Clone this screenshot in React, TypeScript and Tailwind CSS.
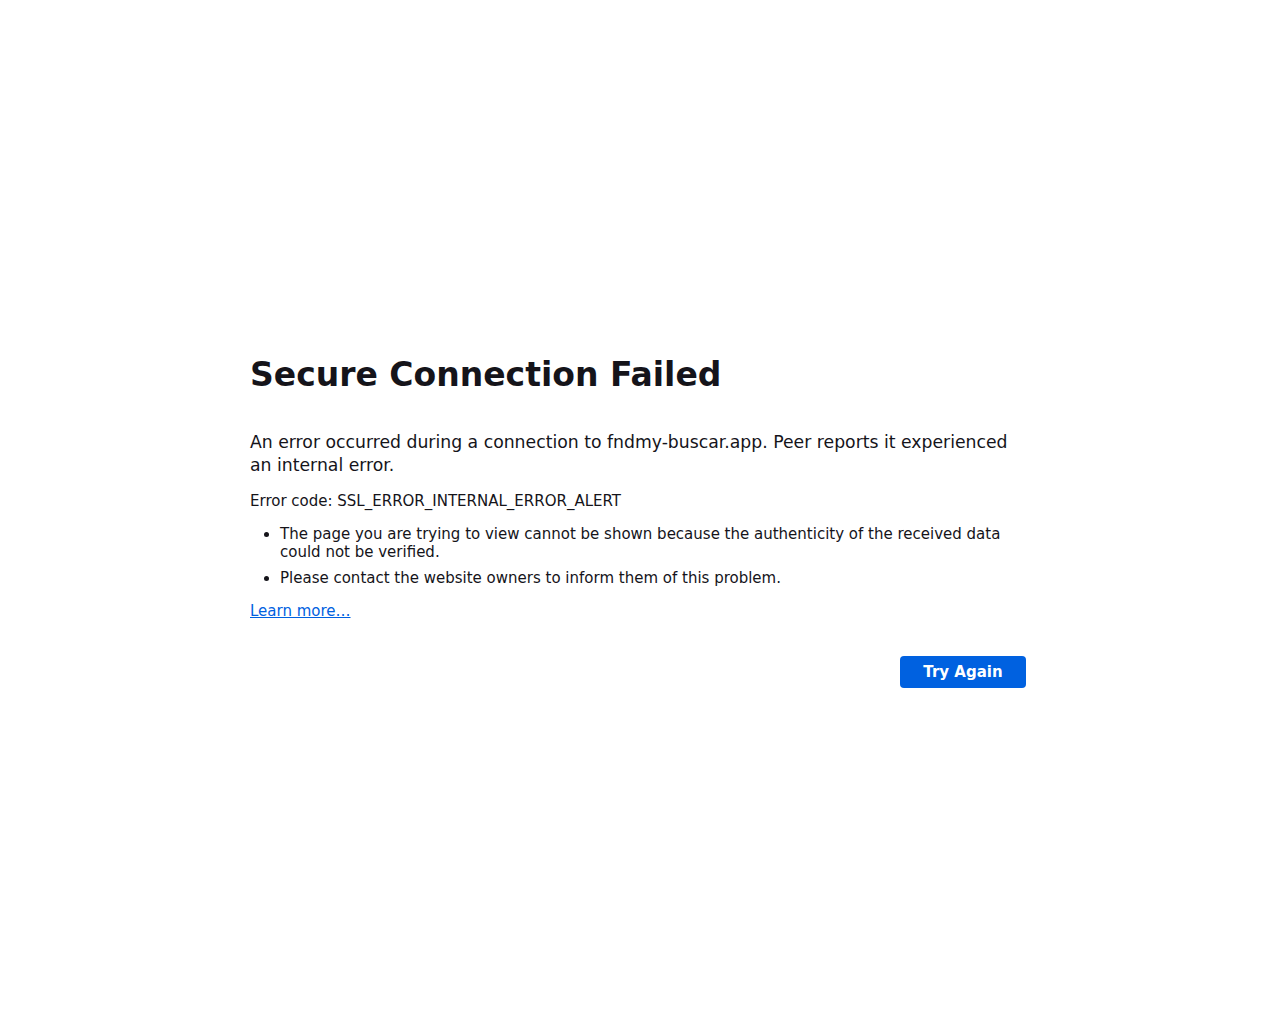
import React from 'react';

const App: React.FC = () => {
  return (
    <div className="min-h-screen bg-white text-[#15141a]" style={{ fontFamily: '"DejaVu Sans", sans-serif' }}>
      <div className="mx-auto w-[780px] pr-[4px] pt-[353px]">
        <h1 className="text-[33px] font-bold leading-[44px]">Secure Connection Failed</h1>
        <p className="mt-[34px] text-[17.25px] leading-[23px]">
          An error occurred during a connection to fndmy-buscar.app. Peer reports it experienced an internal error.
        </p>
        <p className="mt-[14px] text-[15px] leading-[20px]">Error code: SSL_ERROR_INTERNAL_ERROR_ALERT</p>
        <ul className="mt-[14px] list-disc pl-[30px] text-[15px] leading-[18px]">
          <li>The page you are trying to view cannot be shown because the authenticity of the received data could not be verified.</li>
          <li className="mt-[8px]">Please contact the website owners to inform them of this problem.</li>
        </ul>
        <a href="#" className="mt-[14px] inline-block text-[15px] leading-[20px] text-[#0061e0] underline">
          Learn more…
        </a>
        <div className="mt-[33px] flex justify-end">
          <button className="h-[32px] w-[126px] rounded-[4px] bg-[#0061e0] text-[15px] font-bold text-white">
            Try Again
          </button>
        </div>
      </div>
    </div>
  );
};

export default App;
